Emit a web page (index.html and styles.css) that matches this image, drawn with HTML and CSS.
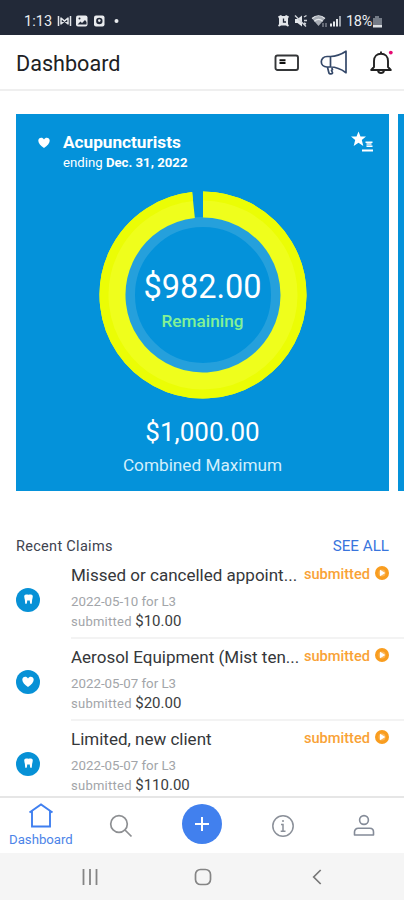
FILE: index.html
```html
<!DOCTYPE html>
<html lang="en">
<head>
<meta charset="utf-8">
<meta name="viewport" content="width=device-width, initial-scale=1">
<title>Dashboard</title>
<link rel="stylesheet" href="styles.css">
</head>
<body>
<svg class="defs" width="0" height="0">
  <defs>
    <path id="heart" d="M6 11C2.6 8.4.3 6.300.3 3.700.3 1.900 1.600.7 3.200.7c1.200 0 2.200.7 2.800 1.700C6.600 1.400 7.600.7 8.800.7c1.600 0 2.900 1.200 2.900 3C11.700 6.300 9.400 8.400 6 11z"/>
    <path id="tooth" d="M.4 1.500C1.400.2 3 .6 4.500.8 6 .6 7.600.2 8.600 1.500c.5 1.300-.2 2.800-.5 4.500-.1 1.600-.2 3.600-.8 3.900-1.200.2-1.300-.8-1.500-3.400H3.200C3 9.100 2.900 10.100 1.700 9.900 1.100 9.600 1 7.600.9 6 .6 4.300-.1 2.800.4 1.500z"/>
    <g id="play"><circle cx="7" cy="7" r="7" fill="#f99d1f"/><circle cx="7" cy="7" r="3.500" fill="#fbb75c"/><path d="M5 3.700v6.600L10.300 7z" fill="#fff"/></g>
  </defs>
</svg>
<div class="phone">
  <div class="status">
    <span class="clock">1:13</span>
    <svg class="status-left" width="66" height="14" viewBox="0 0 66 14" fill="#e9ebee">
      <path d="M1.500 2v10M13.500 2v10M4 3.500v7M11 3.500v7M4 4l7 6M11 4l-7 6" fill="none" stroke="#e2e5e9" stroke-width="1.500"/>
      <rect x="19" y="1.500" width="11.500" height="11" rx="2"/><path d="M20.500 10.500l3-3 1.500 1.500 3-3 1.500 2v2.500z" fill="#222938"/><circle cx="22.500" cy="4.500" r="1" fill="#222938"/>
      <rect x="37" y="1.500" width="10.500" height="11" rx="2"/><circle cx="42.300" cy="7" r="3.200" fill="#222938"/><circle cx="42.300" cy="6.600" r="1.300"/>
      <circle cx="59.500" cy="7" r="2"/>
    </svg>
    <svg class="status-right" width="66" height="14" viewBox="0 0 66 14" fill="#e3e6ea">
      <path d="M1 2.500l3-1.500 1 1h3l1-1 3 1.500-1 2v5.500l1 2-1.500.5-1.500-1H4l-1.500 1L1 12l1-2V4.500z"/><path d="M6.500 4.500V8H9" fill="none" stroke="#222938" stroke-width="1.300"/>
      <path d="M18 5h2.500L25 1.500v11L20.500 9H18z"/><path d="M18 1.500l11 11M27 3l2.500-1.500M27 6.500h3M27 9l2 1" fill="none" stroke="#cfd3d9" stroke-width="1.400"/>
      <path d="M35 4.500c4-3.700 9-3.700 13 0L41.500 12z" fill="#a7acb5"/><path d="M35 4.500c4-3.700 9-3.700 13 0M37.300 7.200c2.500-2.200 6-2.200 8.500 0" fill="none" stroke="#e3e6ea" stroke-width="1.200"/><path d="M46 9v4M49 9v4" stroke="#a7acb5"/>
      <path d="M53 9.500h2v3h-2zM56 7.500h2v5h-2zM59 5h2v7.500h-2z"/><path d="M62 2h2v10.500h-2z" fill="#989ea8"/>
    </svg>
    <span class="battery">18%</span>
    <svg width="9" height="13" viewBox="0 0 9 13"><path d="M0 3h2V1h4v2h3v7H0z" fill="#747b87"/><path d="M0 10h9v2.500H0z" fill="#dfe2e6"/></svg>
  </div>
  <header class="header">
    <h1 class="title">Dashboard</h1>
    <svg class="header-icon" width="26" height="20" viewBox="0 0 26 20" fill="none" stroke="#343638" stroke-width="1.900"><rect x="1.500" y="2.500" width="22.500" height="14.500" rx="2"/><path d="M5.500 7.200h6M5.500 10h6" stroke="#111"/></svg>
    <svg class="header-icon horn" width="28" height="26" viewBox="0 0 28 26" fill="none" stroke="#344869" stroke-width="1.700" stroke-linejoin="round"><path d="M10.500 6.500H7C3.500 6.500 1.300 9 1.300 11.800S3.500 17 7 17h3.500zM10.500 6.500C16.500 6.500 21 4.500 26 1.200v21.500C21 19 16.500 17 10.500 17M7.500 17.200l1.500 6c.5 1.200 3.800.8 3.500-.5l-1-2.200 1-.8-.8-2.500"/></svg>
    <svg class="header-icon bell" width="24" height="26" viewBox="0 0 24 26" fill="none" stroke="#222" stroke-width="1.900" stroke-linejoin="round"><path d="M4 17V11c0-4.500 3-7.300 7-7.300s7 2.800 7 7.300v6l2.800 3H1.200zM11 3.700V1.500M8 20.500c.6 3.300 5.400 3.300 6 0"/><circle cx="20.800" cy="2.600" r="1.900" fill="#e50a72" stroke="none"/></svg>
  </header>
  <main class="main">
    <div class="carousel">
      <section class="card">
        <div class="card-head">
          <svg class="card-heart" width="12" height="11" viewBox="0 0 12 11" fill="#fff"><use href="#heart"/></svg>
          <div class="card-names">
            <div class="card-title">Acupuncturists</div>
            <div class="card-date">ending <b>Dec. 31, 2022</b></div>
          </div>
          <svg class="card-star" width="23" height="22" viewBox="0 0 23 22" fill="#fff"><path d="M7.500.5l2 5h5.500l-4.200 3.500 1.500 6-4.800-3.300L2.700 15l1.500-6L0 5.500h5.500z"/><path d="M14.500 10.500h7v1.500h-7zM15.500 14.500h6v1.500h-6zM11 18.500h11V20.500H11z"/><path d="M15.500 12h5v2.500h-5z" fill="#b6def4"/></svg>
        </div>
        <div class="ring">
          <svg width="208" height="208" viewBox="-104 -104 208 208" fill="none">
            <circle r="73" stroke="#25a0dc" stroke-width="10"/>
            <path d="M0-90.500A90.500 90.500 0 1 1-9.500-90" stroke="#effe1c" stroke-width="26"/>
            <path d="M0-99A99 99 0 1 1-10.400-98.450" stroke="#ebfd05" stroke-width="9"/>
          </svg>
          <div class="ring-label">
            <div class="amount">$982.00</div>
            <div class="remaining">Remaining</div>
          </div>
        </div>
        <div class="maximum">$1,000.00</div>
        <div class="maximum-label">Combined Maximum</div>
      </section>
      <section class="card next"></section>
    </div>
    <div class="claims-head"><h2 class="claims-title">Recent Claims</h2><a class="see-all">SEE ALL</a></div>
    <ul class="claims">
      <li class="claim">
        <span class="badge"><svg width="9" height="11" viewBox="0 0 9 11" fill="#fff"><use href="#tooth"/></svg></span>
        <div class="claim-body">
          <div class="claim-top"><span class="claim-name">Missed or cancelled appoint...</span><span class="state">submitted</span><svg width="14" height="14"><use href="#play"/></svg></div>
          <div class="claim-date">2022-05-10 for L3</div>
          <div class="claim-sum">submitted <b>$10.00</b></div>
        </div>
      </li>
      <li class="claim">
        <span class="badge"><svg width="12" height="11" viewBox="0 0 12 11" fill="#fff"><use href="#heart"/></svg></span>
        <div class="claim-body">
          <div class="claim-top"><span class="claim-name">Aerosol Equipment (Mist ten...</span><span class="state">submitted</span><svg width="14" height="14"><use href="#play"/></svg></div>
          <div class="claim-date">2022-05-07 for L3</div>
          <div class="claim-sum">submitted <b>$20.00</b></div>
        </div>
      </li>
      <li class="claim">
        <span class="badge"><svg width="9" height="11" viewBox="0 0 9 11" fill="#fff"><use href="#tooth"/></svg></span>
        <div class="claim-body">
          <div class="claim-top"><span class="claim-name">Limited, new client</span><span class="state">submitted</span><svg width="14" height="14"><use href="#play"/></svg></div>
          <div class="claim-date">2022-05-07 for L3</div>
          <div class="claim-sum">submitted <b>$110.00</b></div>
        </div>
      </li>
    </ul>
  </main>
  <nav class="tabs">
    <a class="tab active"><svg width="26" height="25" viewBox="0 0 26 25" fill="none" stroke="#3f7ff0" stroke-width="1.900"><path d="M1.500 9.500L13 1.500l11.500 8M4 8v15.500h18V8"/></svg><span class="tab-label">Dashboard</span></a>
    <a class="tab"><svg width="24" height="24" viewBox="0 0 24 24" fill="none" stroke="#8d8f92" stroke-width="1.700"><circle cx="10" cy="10" r="8.300"/><path d="M16 16l6.500 6.500"/></svg></a>
    <a class="tab"><span class="plus"><svg width="16" height="16" viewBox="0 0 16 16" stroke="#fff" stroke-width="2"><path d="M8 1v14M1 8h14"/></svg></span></a>
    <a class="tab"><svg width="24" height="24" viewBox="0 0 24 24" fill="none" stroke="#8b9099" stroke-width="1.500"><circle cx="12" cy="12" r="10.200"/><path d="M10 10.500h2v6.500M9.700 17.200h4.800"/><circle cx="12" cy="7" r="1" fill="#8b9099" stroke="none"/></svg></a>
    <a class="tab"><svg width="24" height="24" viewBox="0 0 24 24" fill="none" stroke="#848b98" stroke-width="1.600"><circle cx="12" cy="6" r="4.400"/><path d="M2.500 21v-3c0-2.200 1.500-3.700 3.700-3.700h11.600c2.200 0 3.700 1.500 3.700 3.700v3z" stroke-linejoin="round"/></svg></a>
  </nav>
  <div class="system">
    <svg width="16" height="16" viewBox="0 0 16 16" stroke="#858585" stroke-width="1.800"><path d="M1.500 0v16M8 0v16M14.500 0v16"/></svg>
    <svg class="home-key" width="18" height="18" viewBox="0 0 18 18" fill="none" stroke="#858585" stroke-width="1.700"><rect x="1.500" y="1.500" width="15" height="15" rx="5"/></svg>
    <svg width="10" height="16" viewBox="0 0 10 16" fill="none" stroke="#777" stroke-width="1.700"><path d="M8.700 1L1.700 8l7 7"/></svg>
  </div>
</div>
</body>
</html>
```
FILE: styles.css
```css
* { box-sizing: border-box; }
body { margin: 0; font-family: Roboto, "Liberation Sans", sans-serif; background: #fff; }
h1, h2, ul { margin: 0; padding: 0; font-weight: 400; list-style: none; }
svg { display: block; flex: none; }
.defs { position: absolute; }
.phone { width: 404px; height: 900px; display: flex; flex-direction: column; overflow: hidden; white-space: nowrap; }

.status { height: 35px; flex: none; display: flex; align-items: center; padding: 7px 22px 0 24px; background: #222938; color: #eceef1; font-size: 14.5px; }
.clock { width: 33px; letter-spacing: .1px; }
.status-left { margin-right: auto; }
.status-right { margin-right: 3px; }
.battery { width: 27px; letter-spacing: -.3px; }

.header { height: 56px; flex: none; display: flex; align-items: center; padding: 2px 10px 0 16px; border-bottom: 2px solid #efefef; }
.title { margin-right: auto; font-size: 21.6px; color: #202124; padding-top: 1px; }
.horn { margin-left: 20px; }
.bell { margin-left: 22px; }

.main { flex: 1; min-height: 0; overflow: hidden; padding-top: 23px; }
.carousel { display: flex; gap: 9px; padding-left: 16px; overflow: hidden; }
.card { width: 373px; height: 377px; flex: none; background: #0492da; color: #fff; text-align: center; }
.card-head { display: flex; align-items: flex-start; padding: 17px 15px 0 22px; height: 77px; }
.card-heart { margin-top: 6px; }
.card-names { margin: 1px auto 0 13px; text-align: left; }
.card-title { font-size: 17.2px; line-height: 20px; font-weight: 700; }
.card-date { font-size: 13.2px; line-height: 18px; margin-top: 2px; }
.ring { width: 208px; height: 208px; margin: 0 auto; display: grid; }
.ring > * { grid-area: 1 / 1; }
.ring-label { padding-top: 75px; }
.amount { font-size: 32.5px; line-height: 42px; }
.remaining { font-size: 17.2px; line-height: 20px; margin-top: 3px; font-weight: 500; color: #83f295; }
.maximum { font-size: 26px; line-height: 32px; margin-top: 17px; }
.maximum-label { font-size: 17.2px; line-height: 24px; margin-top: 5px; color: #d2effc; }

.claims-head { display: flex; justify-content: space-between; padding: 0 15px 0 16px; margin-top: 44px; line-height: 22px; }
.claims-title { font-size: 14.500px; color: #40434f; letter-spacing: .3px; padding-top: 1px; height: 22px; }
.see-all { font-size: 15.2px; color: #3975dd; }
.claims { padding-left: 16px; }
.claim { height: 82px; display: flex; align-items: center; }
.badge { width: 24px; height: 24px; margin-right: 31px; margin-top: 3px; border-radius: 50%; background: #0791d6; display: grid; place-items: center; }
.claim-body { flex: 1; height: 82px; padding-top: 6px; border-bottom: 2px solid #f3f3f3; }
.claim-top { display: flex; height: 24px; align-items: flex-start; padding-right: 15px; }
.claim-name { font-size: 17px; line-height: 24px; color: #35373a; margin-right: auto; }
.state { font-size: 14.600px; font-weight: 500; line-height: 22px; color: #f9a236; margin-right: 5px; }
.claim-top svg { margin-top: 3px; }
.claim-date { font-size: 13.3px; line-height: 20px; color: #a2a5a9; margin-top: 5px; }
.claim-sum { font-size: 13px; line-height: 19px; color: #a2a5a9; letter-spacing: .25px; }
.claim-sum b { font-size: 15px; font-weight: 400; color: #3b3d40; letter-spacing: 0; }

.tabs { height: 57px; flex: none; display: grid; grid-template-columns: repeat(5, 1fr); border-top: 2px solid #e6e6e6; background: #fff; }
.tab { display: flex; flex-direction: column; align-items: center; justify-content: center; }
.active { justify-content: flex-start; padding: 5px 0 0 1px; }
.tab-label { font-size: 13.2px; line-height: 16px; margin-top: 4px; color: #4c84e8; }
.plus { width: 40px; height: 40px; margin-bottom: 4px; border-radius: 50%; background: #4180ee; display: grid; place-items: center; }
.system { height: 47px; flex: none; background: #f5f5f5; display: flex; align-items: center; justify-content: space-between; padding: 0 82px 0 82px; }
.home-key { margin-right: 4px; }
```
